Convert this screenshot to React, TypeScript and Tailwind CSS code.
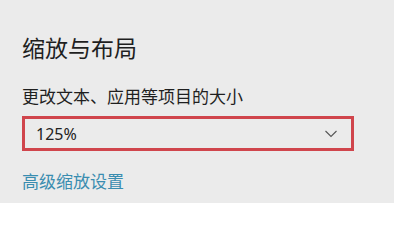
import React from 'react';

const App: React.FC = () => {
  return (
    <div className="w-[394px] h-[203px] bg-[#ebebeb] overflow-hidden font-['Noto_Sans','Noto_Sans_CJK_SC',sans-serif] pl-[22px] pt-[33px]">
      <h2 className="text-[23px] leading-[30px] text-[#1f1f1f] font-normal">缩放与布局</h2>

      <p className="mt-[23px] text-[17px] leading-[22px] text-[#1f1f1f]">更改文本、应用等项目的大小</p>

      <div className="mt-[8px] w-[332px] h-[35px] border-[3px] border-[#d0454c] flex items-center justify-between pl-[11px] pr-[14px]">
        <span className="text-[16px] leading-none text-[#222]">125%</span>
        <svg width="12" height="8" viewBox="0 0 12 8" fill="none">
          <path d="M0.5 1 L6 6.5 L11.5 1" stroke="#555" strokeWidth="1.1" />
        </svg>
      </div>

      <a className="block mt-[20px] text-[17px] leading-[22px] text-[#3a8db0] cursor-pointer">高级缩放设置</a>
    </div>
  );
};

export default App;
